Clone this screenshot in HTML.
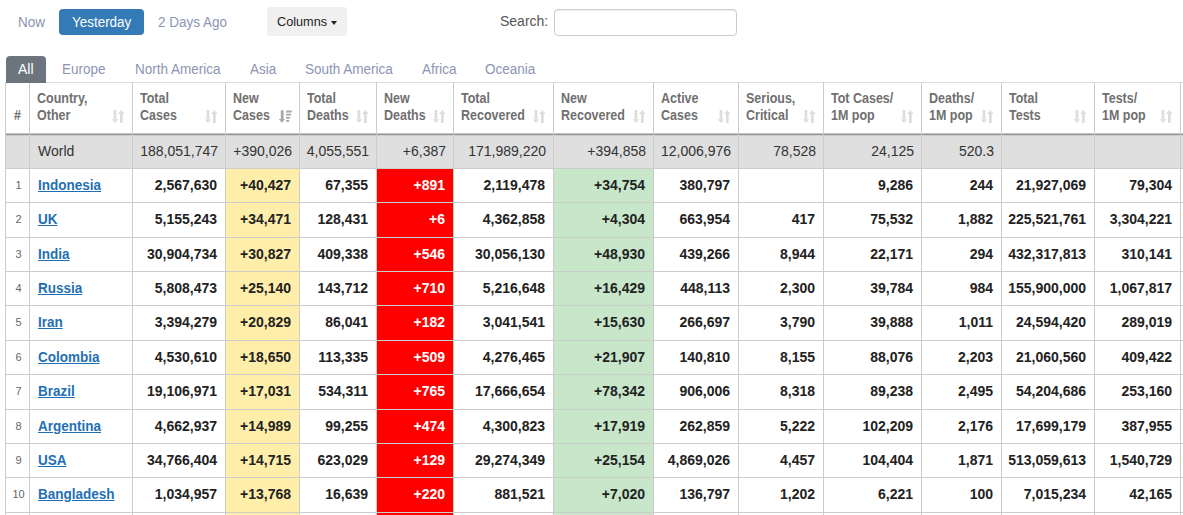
<!DOCTYPE html><html><head><meta charset="utf-8"><style>

html,body{margin:0;padding:0;background:#fff;width:1183px;height:515px;overflow:hidden;position:relative;font-family:"Liberation Sans", sans-serif;}
.a{position:absolute;}
.ln{position:absolute;background:#cccccc;}
.t{position:absolute;white-space:nowrap;}
.c{position:absolute;white-space:nowrap;display:flex;align-items:center;}
.r{justify-content:flex-end;}
.d{font-size:14px;font-weight:bold;color:#222;}
.w{font-size:14px;color:#333;}
.h{font-size:12.5px;font-weight:bold;color:#707070;line-height:17px;transform:scaleY(1.1);transform-origin:left bottom;}
.lk{color:#1f6fb5;text-decoration:underline;font-weight:bold;font-size:14px;display:inline-block;transform:scaleX(0.965);transform-origin:left center;}
.nav{font-size:14px;color:#8d94b4;transform:scaleX(0.965);transform-origin:left center;}

</style></head><body>
<div class="t nav" style="left:18px;top:14px;line-height:16px;">Now</div>
<div class="a" style="left:59px;top:9px;width:85px;height:26px;background:#337ab7;border-radius:4px;"></div>
<div class="t" style="left:72px;top:14px;line-height:16px;font-size:14px;color:#fff;transform:scaleX(0.96);transform-origin:left center;">Yesterday</div>
<div class="t nav" style="left:158px;top:14px;line-height:16px;">2 Days Ago</div>
<div class="a" style="left:267px;top:7px;width:80px;height:29px;background:#f0f0f0;border-radius:3px;"></div>
<div class="t" style="left:277px;top:14px;line-height:16px;font-size:13px;color:#222;transform:scaleX(0.975);transform-origin:left center;">Columns</div>
<div class="a" style="left:331px;top:21px;width:0;height:0;border-left:3.5px solid transparent;border-right:3.5px solid transparent;border-top:4px solid #222;"></div>
<div class="t" style="left:500px;top:13px;line-height:16px;font-size:14px;color:#555;">Search:</div>
<div class="a" style="left:554px;top:9px;width:181px;height:25px;border:1px solid #ccc;border-radius:4px;background:#fff;box-shadow:inset 0 1px 1px rgba(0,0,0,.075);"></div>
<div class="a" style="left:5px;top:135px;width:1178px;height:33px;background:#dfdfdf;"></div>
<div class="a" style="left:226px;top:168px;width:73px;height:347px;background:#ffeeaa;"></div>
<div class="a" style="left:377px;top:168px;width:76px;height:347px;background:#ff0000;"></div>
<div class="a" style="left:554px;top:168px;width:99px;height:347px;background:#c8e6c9;"></div>
<div class="ln" style="left:5px;top:82px;width:1178px;height:1px;background:#dddddd;"></div>
<div class="ln" style="left:5px;top:133px;width:1178px;height:1px;background:#c2c2c2;"></div>
<div class="ln" style="left:5px;top:134px;width:1178px;height:1px;background:#979797;"></div>
<div class="ln" style="left:5px;top:135px;width:1178px;height:1px;background:#cacaca;"></div>
<div class="ln" style="left:5px;top:168px;width:1178px;height:1px;"></div>
<div class="ln" style="left:5px;top:202px;width:1178px;height:1px;"></div>
<div class="ln" style="left:5px;top:237px;width:1178px;height:1px;"></div>
<div class="ln" style="left:5px;top:271px;width:1178px;height:1px;"></div>
<div class="ln" style="left:5px;top:305px;width:1178px;height:1px;"></div>
<div class="ln" style="left:5px;top:340px;width:1178px;height:1px;"></div>
<div class="ln" style="left:5px;top:374px;width:1178px;height:1px;"></div>
<div class="ln" style="left:5px;top:409px;width:1178px;height:1px;"></div>
<div class="ln" style="left:5px;top:443px;width:1178px;height:1px;"></div>
<div class="ln" style="left:5px;top:477px;width:1178px;height:1px;"></div>
<div class="ln" style="left:5px;top:512px;width:1178px;height:1px;"></div>
<div class="ln" style="left:5px;top:82px;width:1px;height:433px;"></div>
<div class="ln" style="left:29px;top:82px;width:1px;height:433px;"></div>
<div class="ln" style="left:132px;top:82px;width:1px;height:433px;"></div>
<div class="ln" style="left:225px;top:82px;width:1px;height:433px;"></div>
<div class="ln" style="left:299px;top:82px;width:1px;height:433px;"></div>
<div class="ln" style="left:376px;top:82px;width:1px;height:433px;"></div>
<div class="ln" style="left:453px;top:82px;width:1px;height:433px;"></div>
<div class="ln" style="left:553px;top:82px;width:1px;height:433px;"></div>
<div class="ln" style="left:653px;top:82px;width:1px;height:433px;"></div>
<div class="ln" style="left:738px;top:82px;width:1px;height:433px;"></div>
<div class="ln" style="left:823px;top:82px;width:1px;height:433px;"></div>
<div class="ln" style="left:921px;top:82px;width:1px;height:433px;"></div>
<div class="ln" style="left:1001px;top:82px;width:1px;height:433px;"></div>
<div class="ln" style="left:1094px;top:82px;width:1px;height:433px;"></div>
<div class="ln" style="left:1180px;top:82px;width:1px;height:433px;"></div>
<div class="a" style="left:6px;top:56px;width:40px;height:27px;background:#6c757d;border-radius:4px 4px 0 0;"></div>
<div class="t" style="left:18px;top:61px;line-height:16px;font-size:14px;color:#fff;">All</div>
<div class="t nav" style="left:62px;top:61px;line-height:16px;">Europe</div>
<div class="t nav" style="left:135px;top:61px;line-height:16px;">North America</div>
<div class="t nav" style="left:250px;top:61px;line-height:16px;">Asia</div>
<div class="t nav" style="left:305px;top:61px;line-height:16px;">South America</div>
<div class="t nav" style="left:422px;top:61px;line-height:16px;">Africa</div>
<div class="t nav" style="left:485px;top:61px;line-height:16px;">Oceania</div>
<div class="t h" style="left:6px;top:108px;width:23px;text-align:center;">#</div>
<div class="t h" style="left:37px;top:91px;">Country,</div>
<div class="t h" style="left:37px;top:108px;">Other</div>
<div class="t h" style="left:140px;top:91px;">Total</div>
<div class="t h" style="left:140px;top:108px;">Cases</div>
<div class="t h" style="left:233px;top:91px;">New</div>
<div class="t h" style="left:233px;top:108px;">Cases</div>
<div class="t h" style="left:307px;top:91px;">Total</div>
<div class="t h" style="left:307px;top:108px;">Deaths</div>
<div class="t h" style="left:384px;top:91px;">New</div>
<div class="t h" style="left:384px;top:108px;">Deaths</div>
<div class="t h" style="left:461px;top:91px;">Total</div>
<div class="t h" style="left:461px;top:108px;">Recovered</div>
<div class="t h" style="left:561px;top:91px;">New</div>
<div class="t h" style="left:561px;top:108px;">Recovered</div>
<div class="t h" style="left:661px;top:91px;">Active</div>
<div class="t h" style="left:661px;top:108px;">Cases</div>
<div class="t h" style="left:746px;top:91px;">Serious,</div>
<div class="t h" style="left:746px;top:108px;">Critical</div>
<div class="t h" style="left:831px;top:91px;">Tot&nbsp;Cases/</div>
<div class="t h" style="left:831px;top:108px;">1M pop</div>
<div class="t h" style="left:929px;top:91px;">Deaths/</div>
<div class="t h" style="left:929px;top:108px;">1M pop</div>
<div class="t h" style="left:1009px;top:91px;">Total</div>
<div class="t h" style="left:1009px;top:108px;">Tests</div>
<div class="t h" style="left:1102px;top:91px;">Tests/</div>
<div class="t h" style="left:1102px;top:108px;">1M pop</div>
<svg width="14" height="14" viewBox="0 0 14 14" style="position:absolute;left:111px;top:110px;"><rect x="2.6" y="0" width="2.7" height="9.3" fill="#dddddd"/><polygon points="0.6,9.2 7.3,9.2 3.95,13" fill="#dddddd"/><rect x="9" y="3.9" width="2.7" height="9.1" fill="#dddddd"/><polygon points="7,4 13.7,4 10.35,0" fill="#dddddd"/></svg>
<svg width="14" height="14" viewBox="0 0 14 14" style="position:absolute;left:204px;top:110px;"><rect x="2.6" y="0" width="2.7" height="9.3" fill="#dddddd"/><polygon points="0.6,9.2 7.3,9.2 3.95,13" fill="#dddddd"/><rect x="9" y="3.9" width="2.7" height="9.1" fill="#dddddd"/><polygon points="7,4 13.7,4 10.35,0" fill="#dddddd"/></svg>
<svg width="14" height="14" viewBox="0 0 14 14" style="position:absolute;left:278px;top:110px;"><rect x="2.8" y="0.2" width="2.8" height="9.2" fill="#aaaaaa"/><polygon points="0.7,9.1 7.1,9.1 3.9,12.8" fill="#aaaaaa"/><rect x="8" y="0.5" width="5.8" height="2" fill="#aaaaaa"/><rect x="8" y="3.7" width="5" height="1.8" fill="#aaaaaa"/><rect x="8" y="6.9" width="4" height="1.8" fill="#aaaaaa"/><rect x="8" y="10" width="3.2" height="1.8" fill="#aaaaaa"/></svg>
<svg width="14" height="14" viewBox="0 0 14 14" style="position:absolute;left:355px;top:110px;"><rect x="2.6" y="0" width="2.7" height="9.3" fill="#dddddd"/><polygon points="0.6,9.2 7.3,9.2 3.95,13" fill="#dddddd"/><rect x="9" y="3.9" width="2.7" height="9.1" fill="#dddddd"/><polygon points="7,4 13.7,4 10.35,0" fill="#dddddd"/></svg>
<svg width="14" height="14" viewBox="0 0 14 14" style="position:absolute;left:432px;top:110px;"><rect x="2.6" y="0" width="2.7" height="9.3" fill="#dddddd"/><polygon points="0.6,9.2 7.3,9.2 3.95,13" fill="#dddddd"/><rect x="9" y="3.9" width="2.7" height="9.1" fill="#dddddd"/><polygon points="7,4 13.7,4 10.35,0" fill="#dddddd"/></svg>
<svg width="14" height="14" viewBox="0 0 14 14" style="position:absolute;left:532px;top:110px;"><rect x="2.6" y="0" width="2.7" height="9.3" fill="#dddddd"/><polygon points="0.6,9.2 7.3,9.2 3.95,13" fill="#dddddd"/><rect x="9" y="3.9" width="2.7" height="9.1" fill="#dddddd"/><polygon points="7,4 13.7,4 10.35,0" fill="#dddddd"/></svg>
<svg width="14" height="14" viewBox="0 0 14 14" style="position:absolute;left:632px;top:110px;"><rect x="2.6" y="0" width="2.7" height="9.3" fill="#dddddd"/><polygon points="0.6,9.2 7.3,9.2 3.95,13" fill="#dddddd"/><rect x="9" y="3.9" width="2.7" height="9.1" fill="#dddddd"/><polygon points="7,4 13.7,4 10.35,0" fill="#dddddd"/></svg>
<svg width="14" height="14" viewBox="0 0 14 14" style="position:absolute;left:717px;top:110px;"><rect x="2.6" y="0" width="2.7" height="9.3" fill="#dddddd"/><polygon points="0.6,9.2 7.3,9.2 3.95,13" fill="#dddddd"/><rect x="9" y="3.9" width="2.7" height="9.1" fill="#dddddd"/><polygon points="7,4 13.7,4 10.35,0" fill="#dddddd"/></svg>
<svg width="14" height="14" viewBox="0 0 14 14" style="position:absolute;left:802px;top:110px;"><rect x="2.6" y="0" width="2.7" height="9.3" fill="#dddddd"/><polygon points="0.6,9.2 7.3,9.2 3.95,13" fill="#dddddd"/><rect x="9" y="3.9" width="2.7" height="9.1" fill="#dddddd"/><polygon points="7,4 13.7,4 10.35,0" fill="#dddddd"/></svg>
<svg width="14" height="14" viewBox="0 0 14 14" style="position:absolute;left:900px;top:110px;"><rect x="2.6" y="0" width="2.7" height="9.3" fill="#dddddd"/><polygon points="0.6,9.2 7.3,9.2 3.95,13" fill="#dddddd"/><rect x="9" y="3.9" width="2.7" height="9.1" fill="#dddddd"/><polygon points="7,4 13.7,4 10.35,0" fill="#dddddd"/></svg>
<svg width="14" height="14" viewBox="0 0 14 14" style="position:absolute;left:980px;top:110px;"><rect x="2.6" y="0" width="2.7" height="9.3" fill="#dddddd"/><polygon points="0.6,9.2 7.3,9.2 3.95,13" fill="#dddddd"/><rect x="9" y="3.9" width="2.7" height="9.1" fill="#dddddd"/><polygon points="7,4 13.7,4 10.35,0" fill="#dddddd"/></svg>
<svg width="14" height="14" viewBox="0 0 14 14" style="position:absolute;left:1073px;top:110px;"><rect x="2.6" y="0" width="2.7" height="9.3" fill="#dddddd"/><polygon points="0.6,9.2 7.3,9.2 3.95,13" fill="#dddddd"/><rect x="9" y="3.9" width="2.7" height="9.1" fill="#dddddd"/><polygon points="7,4 13.7,4 10.35,0" fill="#dddddd"/></svg>
<svg width="14" height="14" viewBox="0 0 14 14" style="position:absolute;left:1159px;top:110px;"><rect x="2.6" y="0" width="2.7" height="9.3" fill="#dddddd"/><polygon points="0.6,9.2 7.3,9.2 3.95,13" fill="#dddddd"/><rect x="9" y="3.9" width="2.7" height="9.1" fill="#dddddd"/><polygon points="7,4 13.7,4 10.35,0" fill="#dddddd"/></svg>
<div class="c w" style="left:38px;top:134px;height:33px;">World</div>
<div class="c w r" style="left:133px;top:134px;width:85px;height:33px;">188,051,747</div>
<div class="c w r" style="left:226px;top:134px;width:66px;height:33px;">+390,026</div>
<div class="c w r" style="left:300px;top:134px;width:69px;height:33px;">4,055,551</div>
<div class="c w r" style="left:377px;top:134px;width:69px;height:33px;">+6,387</div>
<div class="c w r" style="left:454px;top:134px;width:92px;height:33px;">171,989,220</div>
<div class="c w r" style="left:554px;top:134px;width:92px;height:33px;">+394,858</div>
<div class="c w r" style="left:654px;top:134px;width:77px;height:33px;">12,006,976</div>
<div class="c w r" style="left:739px;top:134px;width:77px;height:33px;">78,528</div>
<div class="c w r" style="left:824px;top:134px;width:90px;height:33px;">24,125</div>
<div class="c w r" style="left:922px;top:134px;width:72px;height:33px;">520.3</div>
<div class="c" style="left:7px;top:168px;width:23px;height:33px;justify-content:center;font-size:11px;color:#666;">1</div>
<div class="c" style="left:38px;top:168px;height:33px;"><span class="lk">Indonesia</span></div>
<div class="c d r" style="left:133px;top:168px;width:84px;height:33px;color:#222;">2,567,630</div>
<div class="c d r" style="left:226px;top:168px;width:65px;height:33px;color:#222;">+40,427</div>
<div class="c d r" style="left:300px;top:168px;width:68px;height:33px;color:#222;">67,355</div>
<div class="c d r" style="left:377px;top:168px;width:68px;height:33px;color:#fff;">+891</div>
<div class="c d r" style="left:454px;top:168px;width:91px;height:33px;color:#222;">2,119,478</div>
<div class="c d r" style="left:554px;top:168px;width:91px;height:33px;color:#222;">+34,754</div>
<div class="c d r" style="left:654px;top:168px;width:76px;height:33px;color:#222;">380,797</div>
<div class="c d r" style="left:824px;top:168px;width:89px;height:33px;color:#222;">9,286</div>
<div class="c d r" style="left:922px;top:168px;width:71px;height:33px;color:#222;">244</div>
<div class="c d r" style="left:1002px;top:168px;width:84px;height:33px;color:#222;">21,927,069</div>
<div class="c d r" style="left:1095px;top:168px;width:77px;height:33px;color:#222;">79,304</div>
<div class="c" style="left:7px;top:202px;width:23px;height:34px;justify-content:center;font-size:11px;color:#666;">2</div>
<div class="c" style="left:38px;top:202px;height:34px;"><span class="lk">UK</span></div>
<div class="c d r" style="left:133px;top:202px;width:84px;height:34px;color:#222;">5,155,243</div>
<div class="c d r" style="left:226px;top:202px;width:65px;height:34px;color:#222;">+34,471</div>
<div class="c d r" style="left:300px;top:202px;width:68px;height:34px;color:#222;">128,431</div>
<div class="c d r" style="left:377px;top:202px;width:68px;height:34px;color:#fff;">+6</div>
<div class="c d r" style="left:454px;top:202px;width:91px;height:34px;color:#222;">4,362,858</div>
<div class="c d r" style="left:554px;top:202px;width:91px;height:34px;color:#222;">+4,304</div>
<div class="c d r" style="left:654px;top:202px;width:76px;height:34px;color:#222;">663,954</div>
<div class="c d r" style="left:739px;top:202px;width:76px;height:34px;color:#222;">417</div>
<div class="c d r" style="left:824px;top:202px;width:89px;height:34px;color:#222;">75,532</div>
<div class="c d r" style="left:922px;top:202px;width:71px;height:34px;color:#222;">1,882</div>
<div class="c d r" style="left:1002px;top:202px;width:84px;height:34px;color:#222;">225,521,761</div>
<div class="c d r" style="left:1095px;top:202px;width:77px;height:34px;color:#222;">3,304,221</div>
<div class="c" style="left:7px;top:237px;width:23px;height:33px;justify-content:center;font-size:11px;color:#666;">3</div>
<div class="c" style="left:38px;top:237px;height:33px;"><span class="lk">India</span></div>
<div class="c d r" style="left:133px;top:237px;width:84px;height:33px;color:#222;">30,904,734</div>
<div class="c d r" style="left:226px;top:237px;width:65px;height:33px;color:#222;">+30,827</div>
<div class="c d r" style="left:300px;top:237px;width:68px;height:33px;color:#222;">409,338</div>
<div class="c d r" style="left:377px;top:237px;width:68px;height:33px;color:#fff;">+546</div>
<div class="c d r" style="left:454px;top:237px;width:91px;height:33px;color:#222;">30,056,130</div>
<div class="c d r" style="left:554px;top:237px;width:91px;height:33px;color:#222;">+48,930</div>
<div class="c d r" style="left:654px;top:237px;width:76px;height:33px;color:#222;">439,266</div>
<div class="c d r" style="left:739px;top:237px;width:76px;height:33px;color:#222;">8,944</div>
<div class="c d r" style="left:824px;top:237px;width:89px;height:33px;color:#222;">22,171</div>
<div class="c d r" style="left:922px;top:237px;width:71px;height:33px;color:#222;">294</div>
<div class="c d r" style="left:1002px;top:237px;width:84px;height:33px;color:#222;">432,317,813</div>
<div class="c d r" style="left:1095px;top:237px;width:77px;height:33px;color:#222;">310,141</div>
<div class="c" style="left:7px;top:271px;width:23px;height:33px;justify-content:center;font-size:11px;color:#666;">4</div>
<div class="c" style="left:38px;top:271px;height:33px;"><span class="lk">Russia</span></div>
<div class="c d r" style="left:133px;top:271px;width:84px;height:33px;color:#222;">5,808,473</div>
<div class="c d r" style="left:226px;top:271px;width:65px;height:33px;color:#222;">+25,140</div>
<div class="c d r" style="left:300px;top:271px;width:68px;height:33px;color:#222;">143,712</div>
<div class="c d r" style="left:377px;top:271px;width:68px;height:33px;color:#fff;">+710</div>
<div class="c d r" style="left:454px;top:271px;width:91px;height:33px;color:#222;">5,216,648</div>
<div class="c d r" style="left:554px;top:271px;width:91px;height:33px;color:#222;">+16,429</div>
<div class="c d r" style="left:654px;top:271px;width:76px;height:33px;color:#222;">448,113</div>
<div class="c d r" style="left:739px;top:271px;width:76px;height:33px;color:#222;">2,300</div>
<div class="c d r" style="left:824px;top:271px;width:89px;height:33px;color:#222;">39,784</div>
<div class="c d r" style="left:922px;top:271px;width:71px;height:33px;color:#222;">984</div>
<div class="c d r" style="left:1002px;top:271px;width:84px;height:33px;color:#222;">155,900,000</div>
<div class="c d r" style="left:1095px;top:271px;width:77px;height:33px;color:#222;">1,067,817</div>
<div class="c" style="left:7px;top:305px;width:23px;height:34px;justify-content:center;font-size:11px;color:#666;">5</div>
<div class="c" style="left:38px;top:305px;height:34px;"><span class="lk">Iran</span></div>
<div class="c d r" style="left:133px;top:305px;width:84px;height:34px;color:#222;">3,394,279</div>
<div class="c d r" style="left:226px;top:305px;width:65px;height:34px;color:#222;">+20,829</div>
<div class="c d r" style="left:300px;top:305px;width:68px;height:34px;color:#222;">86,041</div>
<div class="c d r" style="left:377px;top:305px;width:68px;height:34px;color:#fff;">+182</div>
<div class="c d r" style="left:454px;top:305px;width:91px;height:34px;color:#222;">3,041,541</div>
<div class="c d r" style="left:554px;top:305px;width:91px;height:34px;color:#222;">+15,630</div>
<div class="c d r" style="left:654px;top:305px;width:76px;height:34px;color:#222;">266,697</div>
<div class="c d r" style="left:739px;top:305px;width:76px;height:34px;color:#222;">3,790</div>
<div class="c d r" style="left:824px;top:305px;width:89px;height:34px;color:#222;">39,888</div>
<div class="c d r" style="left:922px;top:305px;width:71px;height:34px;color:#222;">1,011</div>
<div class="c d r" style="left:1002px;top:305px;width:84px;height:34px;color:#222;">24,594,420</div>
<div class="c d r" style="left:1095px;top:305px;width:77px;height:34px;color:#222;">289,019</div>
<div class="c" style="left:7px;top:340px;width:23px;height:33px;justify-content:center;font-size:11px;color:#666;">6</div>
<div class="c" style="left:38px;top:340px;height:33px;"><span class="lk">Colombia</span></div>
<div class="c d r" style="left:133px;top:340px;width:84px;height:33px;color:#222;">4,530,610</div>
<div class="c d r" style="left:226px;top:340px;width:65px;height:33px;color:#222;">+18,650</div>
<div class="c d r" style="left:300px;top:340px;width:68px;height:33px;color:#222;">113,335</div>
<div class="c d r" style="left:377px;top:340px;width:68px;height:33px;color:#fff;">+509</div>
<div class="c d r" style="left:454px;top:340px;width:91px;height:33px;color:#222;">4,276,465</div>
<div class="c d r" style="left:554px;top:340px;width:91px;height:33px;color:#222;">+21,907</div>
<div class="c d r" style="left:654px;top:340px;width:76px;height:33px;color:#222;">140,810</div>
<div class="c d r" style="left:739px;top:340px;width:76px;height:33px;color:#222;">8,155</div>
<div class="c d r" style="left:824px;top:340px;width:89px;height:33px;color:#222;">88,076</div>
<div class="c d r" style="left:922px;top:340px;width:71px;height:33px;color:#222;">2,203</div>
<div class="c d r" style="left:1002px;top:340px;width:84px;height:33px;color:#222;">21,060,560</div>
<div class="c d r" style="left:1095px;top:340px;width:77px;height:33px;color:#222;">409,422</div>
<div class="c" style="left:7px;top:374px;width:23px;height:34px;justify-content:center;font-size:11px;color:#666;">7</div>
<div class="c" style="left:38px;top:374px;height:34px;"><span class="lk">Brazil</span></div>
<div class="c d r" style="left:133px;top:374px;width:84px;height:34px;color:#222;">19,106,971</div>
<div class="c d r" style="left:226px;top:374px;width:65px;height:34px;color:#222;">+17,031</div>
<div class="c d r" style="left:300px;top:374px;width:68px;height:34px;color:#222;">534,311</div>
<div class="c d r" style="left:377px;top:374px;width:68px;height:34px;color:#fff;">+765</div>
<div class="c d r" style="left:454px;top:374px;width:91px;height:34px;color:#222;">17,666,654</div>
<div class="c d r" style="left:554px;top:374px;width:91px;height:34px;color:#222;">+78,342</div>
<div class="c d r" style="left:654px;top:374px;width:76px;height:34px;color:#222;">906,006</div>
<div class="c d r" style="left:739px;top:374px;width:76px;height:34px;color:#222;">8,318</div>
<div class="c d r" style="left:824px;top:374px;width:89px;height:34px;color:#222;">89,238</div>
<div class="c d r" style="left:922px;top:374px;width:71px;height:34px;color:#222;">2,495</div>
<div class="c d r" style="left:1002px;top:374px;width:84px;height:34px;color:#222;">54,204,686</div>
<div class="c d r" style="left:1095px;top:374px;width:77px;height:34px;color:#222;">253,160</div>
<div class="c" style="left:7px;top:409px;width:23px;height:33px;justify-content:center;font-size:11px;color:#666;">8</div>
<div class="c" style="left:38px;top:409px;height:33px;"><span class="lk">Argentina</span></div>
<div class="c d r" style="left:133px;top:409px;width:84px;height:33px;color:#222;">4,662,937</div>
<div class="c d r" style="left:226px;top:409px;width:65px;height:33px;color:#222;">+14,989</div>
<div class="c d r" style="left:300px;top:409px;width:68px;height:33px;color:#222;">99,255</div>
<div class="c d r" style="left:377px;top:409px;width:68px;height:33px;color:#fff;">+474</div>
<div class="c d r" style="left:454px;top:409px;width:91px;height:33px;color:#222;">4,300,823</div>
<div class="c d r" style="left:554px;top:409px;width:91px;height:33px;color:#222;">+17,919</div>
<div class="c d r" style="left:654px;top:409px;width:76px;height:33px;color:#222;">262,859</div>
<div class="c d r" style="left:739px;top:409px;width:76px;height:33px;color:#222;">5,222</div>
<div class="c d r" style="left:824px;top:409px;width:89px;height:33px;color:#222;">102,209</div>
<div class="c d r" style="left:922px;top:409px;width:71px;height:33px;color:#222;">2,176</div>
<div class="c d r" style="left:1002px;top:409px;width:84px;height:33px;color:#222;">17,699,179</div>
<div class="c d r" style="left:1095px;top:409px;width:77px;height:33px;color:#222;">387,955</div>
<div class="c" style="left:7px;top:443px;width:23px;height:33px;justify-content:center;font-size:11px;color:#666;">9</div>
<div class="c" style="left:38px;top:443px;height:33px;"><span class="lk">USA</span></div>
<div class="c d r" style="left:133px;top:443px;width:84px;height:33px;color:#222;">34,766,404</div>
<div class="c d r" style="left:226px;top:443px;width:65px;height:33px;color:#222;">+14,715</div>
<div class="c d r" style="left:300px;top:443px;width:68px;height:33px;color:#222;">623,029</div>
<div class="c d r" style="left:377px;top:443px;width:68px;height:33px;color:#fff;">+129</div>
<div class="c d r" style="left:454px;top:443px;width:91px;height:33px;color:#222;">29,274,349</div>
<div class="c d r" style="left:554px;top:443px;width:91px;height:33px;color:#222;">+25,154</div>
<div class="c d r" style="left:654px;top:443px;width:76px;height:33px;color:#222;">4,869,026</div>
<div class="c d r" style="left:739px;top:443px;width:76px;height:33px;color:#222;">4,457</div>
<div class="c d r" style="left:824px;top:443px;width:89px;height:33px;color:#222;">104,404</div>
<div class="c d r" style="left:922px;top:443px;width:71px;height:33px;color:#222;">1,871</div>
<div class="c d r" style="left:1002px;top:443px;width:84px;height:33px;color:#222;">513,059,613</div>
<div class="c d r" style="left:1095px;top:443px;width:77px;height:33px;color:#222;">1,540,729</div>
<div class="c" style="left:7px;top:477px;width:23px;height:34px;justify-content:center;font-size:11px;color:#666;">10</div>
<div class="c" style="left:38px;top:477px;height:34px;"><span class="lk">Bangladesh</span></div>
<div class="c d r" style="left:133px;top:477px;width:84px;height:34px;color:#222;">1,034,957</div>
<div class="c d r" style="left:226px;top:477px;width:65px;height:34px;color:#222;">+13,768</div>
<div class="c d r" style="left:300px;top:477px;width:68px;height:34px;color:#222;">16,639</div>
<div class="c d r" style="left:377px;top:477px;width:68px;height:34px;color:#fff;">+220</div>
<div class="c d r" style="left:454px;top:477px;width:91px;height:34px;color:#222;">881,521</div>
<div class="c d r" style="left:554px;top:477px;width:91px;height:34px;color:#222;">+7,020</div>
<div class="c d r" style="left:654px;top:477px;width:76px;height:34px;color:#222;">136,797</div>
<div class="c d r" style="left:739px;top:477px;width:76px;height:34px;color:#222;">1,202</div>
<div class="c d r" style="left:824px;top:477px;width:89px;height:34px;color:#222;">6,221</div>
<div class="c d r" style="left:922px;top:477px;width:71px;height:34px;color:#222;">100</div>
<div class="c d r" style="left:1002px;top:477px;width:84px;height:34px;color:#222;">7,015,234</div>
<div class="c d r" style="left:1095px;top:477px;width:77px;height:34px;color:#222;">42,165</div>
</body></html>
